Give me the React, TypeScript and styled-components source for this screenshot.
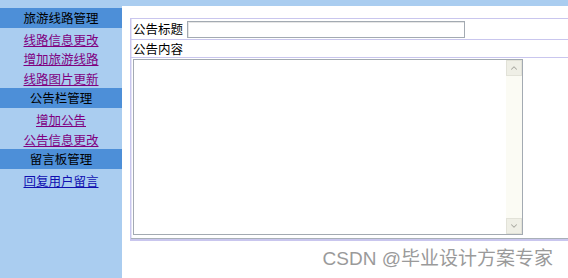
import React from 'react'
import styled, { createGlobalStyle } from 'styled-components'
import { ChevronUp, ChevronDown } from 'lucide-react'

const colorSky = '#aacdf0'
const colorHead = '#4d8fd8'
const colorLine = '#c9c6ee'

const GlobalStyle = createGlobalStyle`
  html, body {
    margin: 0;
    padding: 0;
    overflow: hidden;
  }
  body {
    font-family: "Noto Sans CJK SC", "Liberation Sans", sans-serif;
    font-size: 12px;
    background: ${colorSky};
  }
`

const Page = styled.div`
  position: relative;
  display: flex;
  width: 568px;
  height: 278px;
  overflow: hidden;
`

const Sidebar = styled.nav`
  width: 122px;
  flex: none;
  padding-top: 8px;
  display: flex;
  flex-direction: column;
`

const MenuHead = styled.div`
  height: 20px;
  line-height: 20px;
  font-size: 12.5px;
  background: ${colorHead};
  color: #000;
  text-align: center;
  margin-bottom: 2px;
`

const MenuLink = styled.a<{ $visited?: boolean }>`
  display: block;
  height: 19.4px;
  line-height: 19px;
  font-size: 12.5px;
  text-align: center;
  color: ${(p) => (p.$visited ? '#800080' : '#1010b0')};
  text-decoration: underline;
  cursor: pointer;
`

const Main = styled.main`
  flex: 1;
  margin-top: 6px;
  background: #fff;
  padding: 12px 0 0 8px;
`

const FormBox = styled.div`
  width: 460px;
  border-top: 1px solid ${colorLine};
  border-left: 1px solid ${colorLine};
  border-bottom: 2px solid ${colorLine};
  box-shadow: inset 1px 0 0 #e4e4f6;
`

const Row = styled.div<{ $tall?: boolean }>`
  display: flex;
  align-items: center;
  gap: 4px;
  padding: 0 2px;
  height: ${(p) => (p.$tall ? '20px' : '17px')};
  line-height: 16px;
  border-bottom: 1px solid ${colorLine};
  color: #000;
  font-size: 12.5px;
`

const TitleInput = styled.input`
  width: 272px;
  height: 13px;
  padding: 1px 2px;
  border: 1px solid #a3aab2;
  box-shadow: inset 1px 1px 0 #e6e6e6;
  font: inherit;
`

const EditorCell = styled.div`
  padding: 1px 2px 3px 2px;
  border-bottom: 1px solid #a9b0b8;
`

const EditorWrap = styled.div`
  position: relative;
  width: 390px;
  height: 176px;
`

const Editor = styled.textarea`
  box-sizing: border-box;
  width: 100%;
  height: 100%;
  border: 1px solid #a3aab2;
  resize: none;
  overflow: hidden;
  font: inherit;
  display: block;
`

const Scrollbar = styled.div`
  position: absolute;
  top: 1px;
  right: 1px;
  bottom: 1px;
  width: 16px;
  background: #fbfbf4;
  display: flex;
  flex-direction: column;
  justify-content: space-between;
`

const ScrollButton = styled.div`
  height: 16px;
  background: #efefe6;
  border: 1px solid #e2e2d8;
  box-sizing: border-box;
  display: flex;
  align-items: center;
  justify-content: center;
  color: #a8a8a0;
`

const Watermark = styled.div`
  position: absolute;
  right: 15px;
  bottom: 8px;
  font-family: "Liberation Sans", "Noto Sans CJK SC", sans-serif;
  font-size: 19px;
  line-height: 22px;
  color: #9a9a9a;
`

const menu = [
  {
    title: '旅游线路管理',
    links: [
      { label: '线路信息更改', visited: true },
      { label: '增加旅游线路', visited: true },
      { label: '线路图片更新', visited: true },
    ],
  },
  {
    title: '公告栏管理',
    links: [
      { label: '增加公告', visited: true },
      { label: '公告信息更改', visited: true },
    ],
  },
  {
    title: '留言板管理',
    links: [{ label: '回复用户留言', visited: false }],
  },
]

const App = () => {
  return (
    <>
      <GlobalStyle />
      <Page>
        <Sidebar>
          {menu.map((group) => (
            <React.Fragment key={group.title}>
              <MenuHead>{group.title}</MenuHead>
              {group.links.map((l) => (
                <MenuLink key={l.label} $visited={l.visited}>
                  {l.label}
                </MenuLink>
              ))}
            </React.Fragment>
          ))}
        </Sidebar>
        <Main>
          <FormBox>
            <Row $tall>
              公告标题
              <TitleInput type="text" />
            </Row>
            <Row>公告内容</Row>
            <EditorCell>
              <EditorWrap>
                <Editor />
                <Scrollbar>
                  <ScrollButton>
                    <ChevronUp size={10} strokeWidth={2.5} />
                  </ScrollButton>
                  <ScrollButton>
                    <ChevronDown size={10} strokeWidth={2.5} />
                  </ScrollButton>
                </Scrollbar>
              </EditorWrap>
            </EditorCell>
          </FormBox>
        </Main>
        <Watermark>CSDN @毕业设计方案专家</Watermark>
      </Page>
    </>
  )
}

export default App
